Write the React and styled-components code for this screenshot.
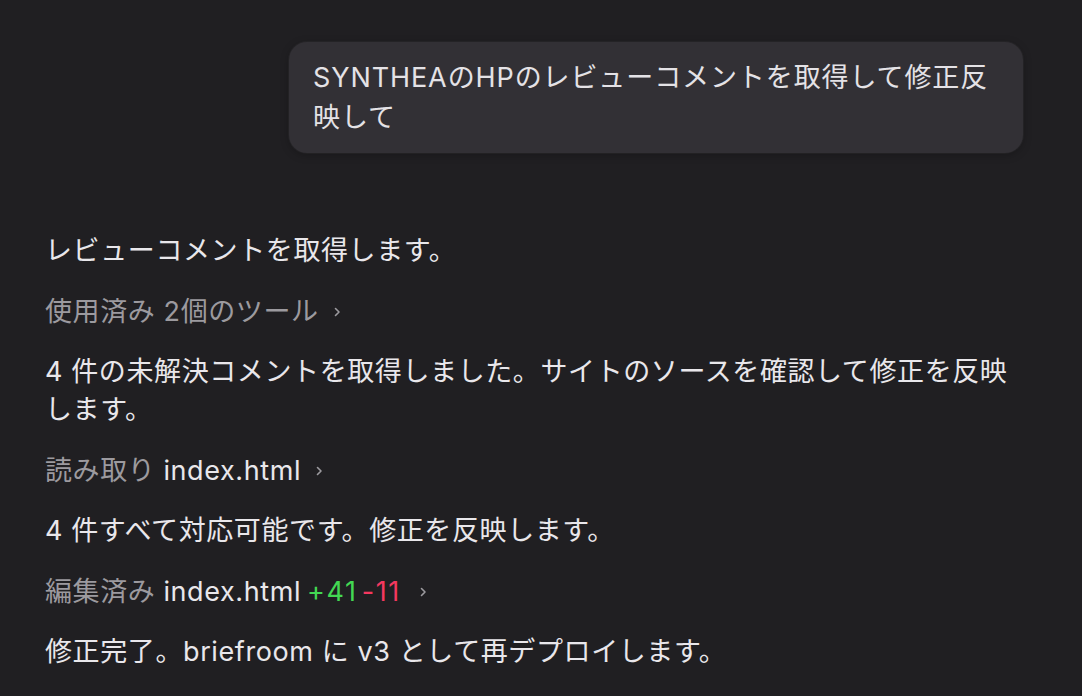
import React from "react";
import styled, { createGlobalStyle } from "styled-components";

const GlobalStyle = createGlobalStyle`
  html, body {
    margin: 0;
    padding: 0;
    background: #201f22;
  }
  body {
    font-family: Inter, "Noto Sans CJK JP", sans-serif;
    -webkit-font-smoothing: antialiased;
  }
`;

const Page = styled.div`
  width: 1082px;
  height: 696px;
  box-sizing: border-box;
  padding: 42px 59px 0 45px;
  background: #201f22;
  overflow: hidden;
  display: flex;
  flex-direction: column;
`;

const UserRow = styled.div`
  display: flex;
  justify-content: flex-end;
  margin-bottom: 79px;
`;

const Bubble = styled.div`
  box-sizing: border-box;
  width: 734px;
  padding: 16px 24px 15px;
  border-radius: 18px;
  background: #323035;
  box-shadow: 0 0 0 1px rgba(255, 255, 255, 0.03), 0 2px 8px rgba(0, 0, 0, 0.25);
  color: #e4e2e6;
  font-size: 27px;
  letter-spacing: 0.9px;
  line-height: 40px;
`;

const Reply = styled.div`
  display: flex;
  flex-direction: column;
  gap: 21.5px;
`;

const Text = styled.p`
  margin: 0;
  color: #e9e7eb;
  font-size: 27px;
  letter-spacing: 0.6px;
  line-height: 38px;
`;

const Tool = styled.div`
  display: flex;
  align-items: center;
  font-size: 27px;
  letter-spacing: 0.6px;
  line-height: 40px;
  color: #9c9a9f;
`;

const Name = styled.span`
  color: #e9e7eb;
  margin-left: 8px;
`;

const Diff = styled.span`
  color: ${(p) => (p.$add ? "#43d853" : "#f5385f")};
  margin-left: ${(p) => (p.$add ? "6px" : "4px")};
  letter-spacing: 1.6px;
`;

const Chevron = styled.svg`
  margin-left: ${(p) => (p.$wide ? "16px" : "12px")};
  width: 12px;
  height: 12px;
  flex: none;
`;

const Arrow = ({ wide }) => (
  <Chevron viewBox="0 0 12 12" $wide={wide}>
    <path
      d="M4.5 2.5 L8 6 L4.5 9.5"
      fill="none"
      stroke="#9c9a9f"
      strokeWidth="1.6"
      strokeLinecap="round"
      strokeLinejoin="round"
    />
  </Chevron>
);

const App = () => {
  return (
    <>
      <GlobalStyle />
      <Page>
        <UserRow>
          <Bubble>SYNTHEAのHPのレビューコメントを取得して修正反映して</Bubble>
        </UserRow>
        <Reply>
          <Text>レビューコメントを取得します。</Text>
          <Tool>
            使用済み 2個のツール
            <Arrow />
          </Tool>
          <Text>
            4 件の未解決コメントを取得しました。サイトのソースを確認して修正を反映します。
          </Text>
          <Tool>
            読み取り<Name>index.html</Name>
            <Arrow />
          </Tool>
          <Text>4 件すべて対応可能です。修正を反映します。</Text>
          <Tool>
            編集済み<Name>index.html</Name>
            <Diff $add>+41</Diff>
            <Diff>-11</Diff>
            <Arrow wide />
          </Tool>
          <Text>修正完了。briefroom に v3 として再デプロイします。</Text>
        </Reply>
      </Page>
    </>
  );
};

export default App;
